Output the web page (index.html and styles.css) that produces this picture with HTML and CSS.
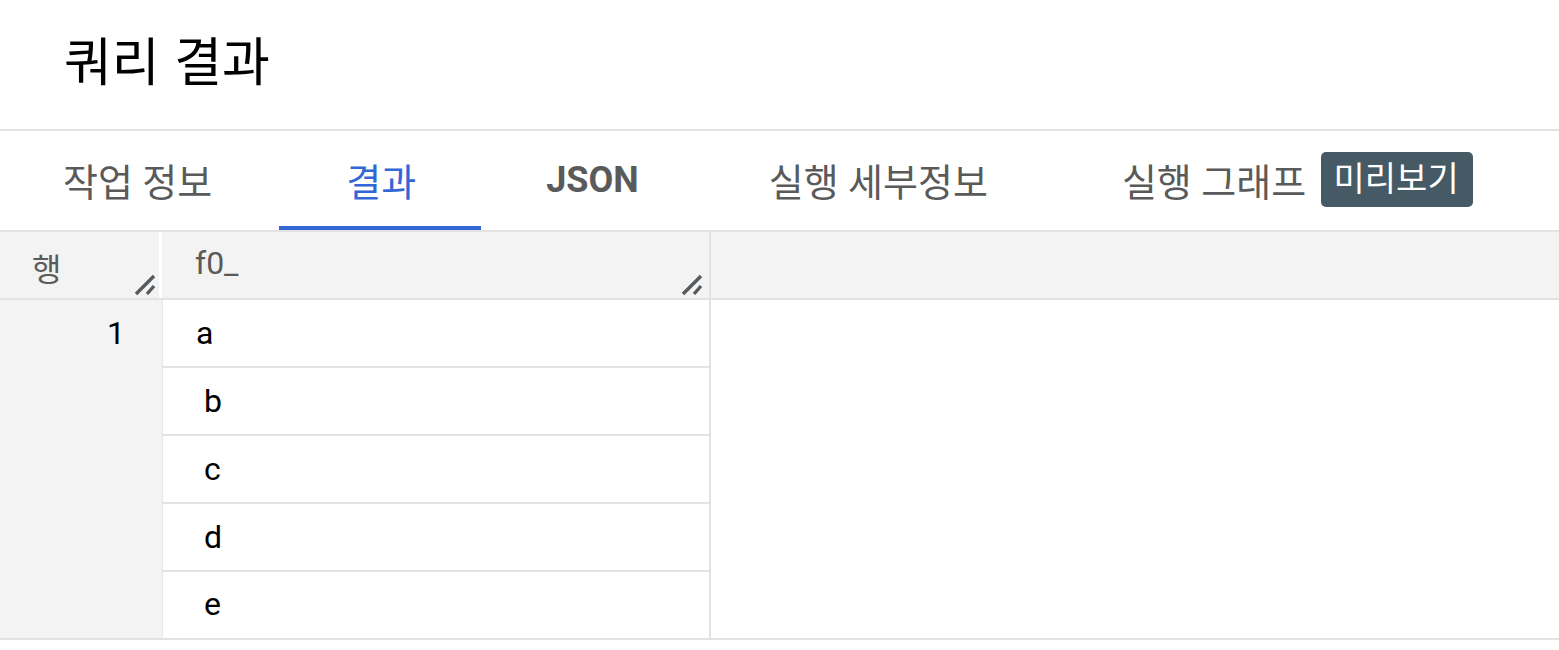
FILE: index.html
```html
<!DOCTYPE html>
<html lang="ko">
<head>
<meta charset="utf-8">
<title>쿼리 결과</title>
<link rel="stylesheet" href="styles.css">
</head>
<body>
<header class="title-bar">
  <h1 class="title">쿼리 결과</h1>
</header>
<nav class="tabs">
  <div class="tab">작업 정보</div>
  <div class="tab active">결과</div>
  <div class="tab bold">JSON</div>
  <div class="tab">실행 세부정보</div>
  <div class="tab">실행 그래프 <span class="badge">미리보기</span></div>
</nav>
<section class="grid">
  <div class="head-row">
    <div class="hcell hnum">행
      <svg class="grip" viewBox="0 0 22 22" width="22" height="22"><path d="M2 20 L20 2 M13 20 L20 12" stroke="#555a5e" stroke-width="3.4" fill="none"/></svg>
    </div>
    <div class="hcell hcol">f0_
      <svg class="grip" viewBox="0 0 22 22" width="22" height="22"><path d="M2 20 L20 2 M13 20 L20 12" stroke="#555a5e" stroke-width="3.4" fill="none"/></svg>
    </div>
    <div class="hcell hrest"></div>
  </div>
  <div class="body-row">
    <div class="numcol"><div class="num">1</div></div>
    <div class="valcol">
      <div class="val first">a</div>
      <div class="val">b</div>
      <div class="val">c</div>
      <div class="val">d</div>
      <div class="val last">e</div>
    </div>
    <div class="restcol"></div>
  </div>
</section>
</body>
</html>
```
FILE: styles.css
```css
* { box-sizing: border-box; }
html, body { margin: 0; padding: 0; background: #fff; }
body {
  font-family: Roboto, "Noto Sans CJK KR", sans-serif;
  color: #000;
}
.title-bar {
  height: 129px;
  padding-left: 64px;
  display: flex;
  align-items: center;
}
.title {
  margin: 0 0 12px 0;
  font-family: "Noto Sans CJK KR", sans-serif;
  font-weight: 400;
  font-size: 52px;
  line-height: 1;
}
.tabs {
  display: flex;
  border-top: 2px solid #e2e2e2;
  border-bottom: 2px solid #e2e2e2;
  height: 103px;
}
.tab {
  position: relative;
  display: flex;
  align-items: center;
  padding: 0 66px 2px 63px;
  font-family: Roboto, "Noto Sans CJK KR", sans-serif;
  font-size: 38px;
  color: #5a5a5a;
  white-space: pre;
}
.tab:first-child { padding-right: 67px; }
.tab:nth-child(2) { padding: 0 65px 2px 67px; }
.tab:nth-child(3) { padding: 0 66px 2px 65px; }
.tab:nth-child(4) { padding: 0 71px 2px 64px; }
.tab.active { color: #3367d6; }
.tab.active::after {
  content: "";
  position: absolute;
  left: 0; right: 0; bottom: 0;
  height: 4px;
  background: #3367d6;
}
.tab.bold { font-weight: 700; font-size: 36px; }
.badge {
  display: inline-block;
  margin-left: 5px;
  background: #455a64;
  color: #fff;
  border-radius: 5px;
  font-size: 34px;
  line-height: 55px;
  height: 55px;
  padding: 0 14px 0 13px;
}
.grid { border-bottom: 2px solid #e2e2e2; }
.head-row {
  display: flex;
  height: 68px;
  border-bottom: 2px solid #e2e2e2;
}
.hcell {
  position: relative;
  background: #f3f3f3;
  font-size: 32px;
  color: #5a5a5a;
  padding-top: 12px;
}
.hnum {
  width: 162px;
  border-right: 3px solid #fff;
  padding-left: 32px;
}
.hcol {
  width: 549px;
  border-right: 2px solid #e2e2e2;
  padding-left: 33px;
}
.hrest { flex: 1; }
.grip {
  position: absolute;
  right: 3px;
  bottom: 2px;
}
.hcol .grip { right: 6px; }
.body-row { display: flex; }
.numcol {
  width: 163px;
  background: #f3f3f3;
  border-right: 1px solid #e6e6e6;
}
.num {
  height: 66px;
  line-height: 66px;
  text-align: right;
  padding-right: 37px;
  font-size: 32px;
}
.valcol {
  width: 548px;
  border-right: 2px solid #e2e2e2;
}
.val {
  height: 68px;
  line-height: 66px;
  border-bottom: 2px solid #e2e2e2;
  padding-left: 41px;
  font-size: 32px;
}
.val.first { padding-left: 33px; }
.val.last { border-bottom: none; height: 66px; line-height: 64px; }
.restcol { flex: 1; }
```
